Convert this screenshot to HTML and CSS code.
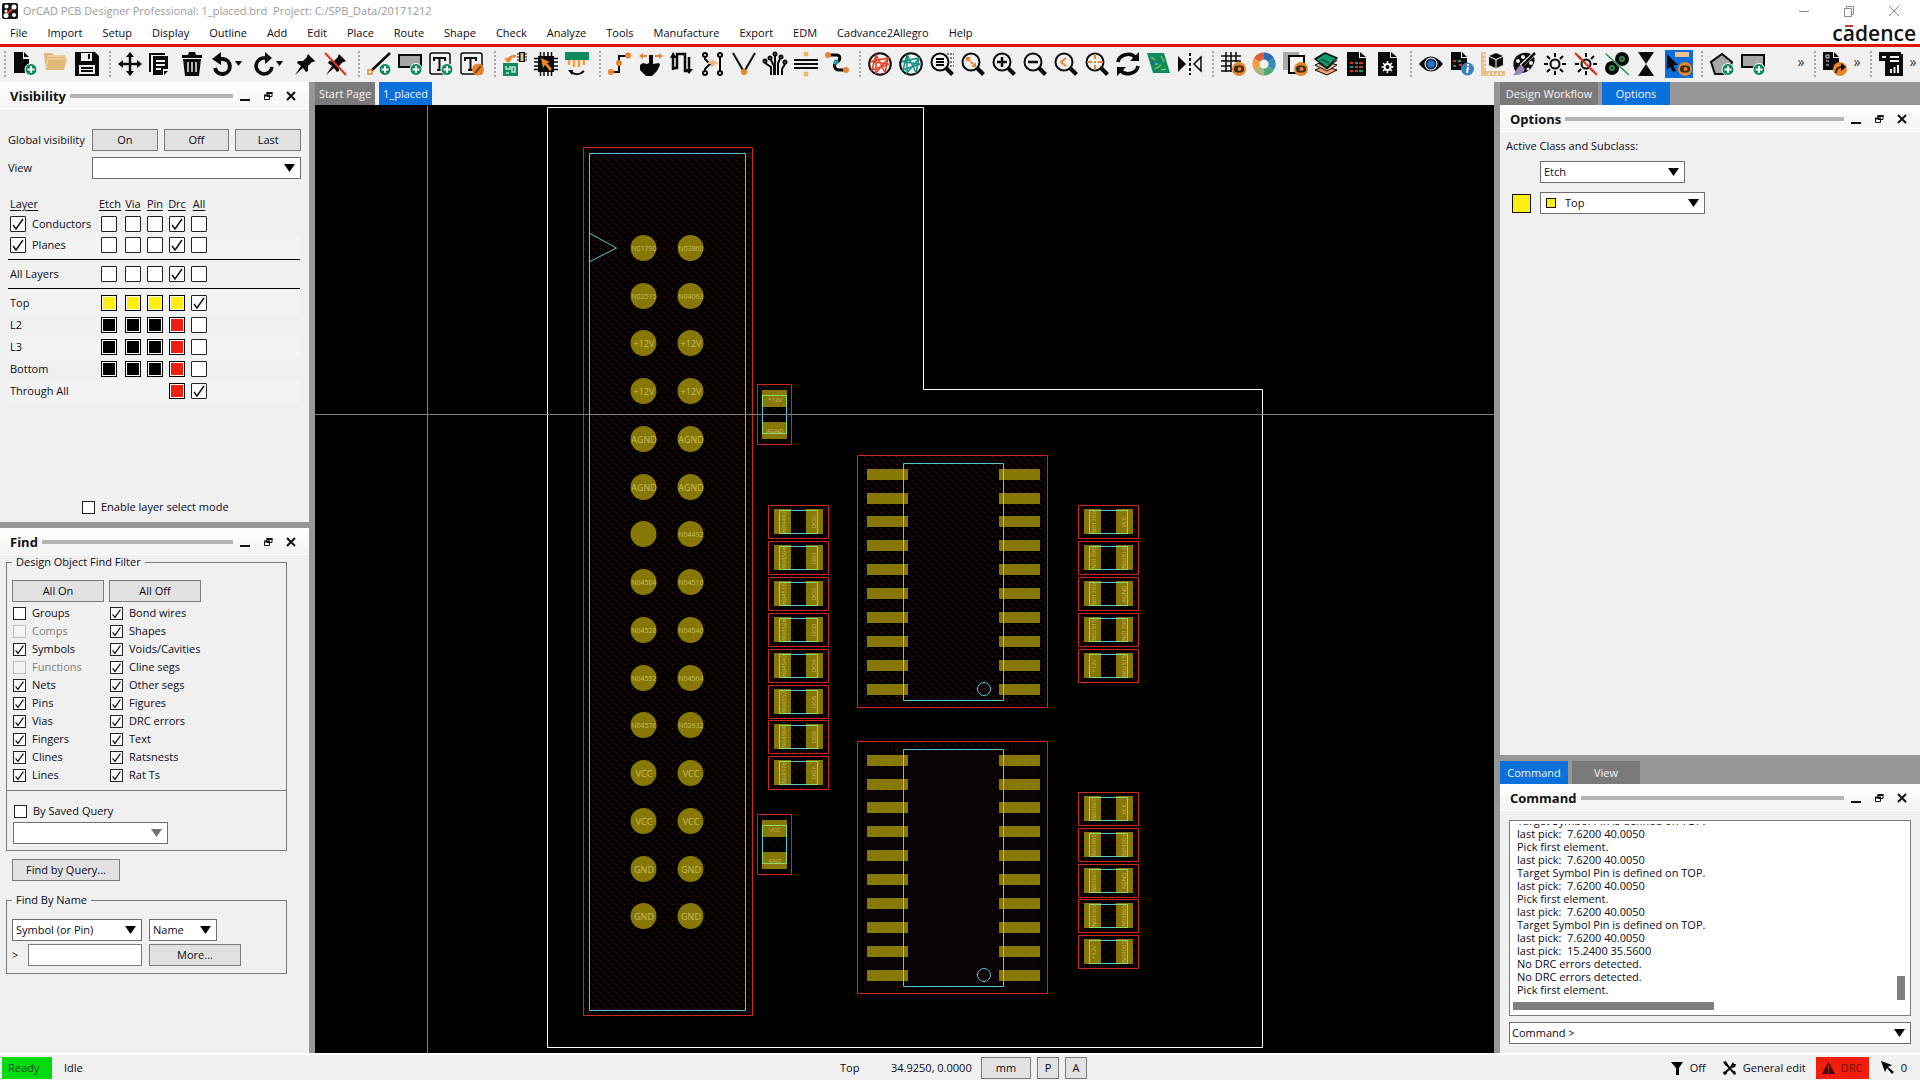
FILE: index.html
```html
<!DOCTYPE html>
<html lang="en">
<head>
<meta charset="utf-8">
<title>OrCAD PCB Designer Professional</title>
<link rel="stylesheet" href="styles.css">
</head>
<body>
<svg class="defs" aria-hidden="true">
  <defs>
    <g id="plus-badge"><circle cx="18" cy="17.500" r="6" fill="#0f8a5c" stroke="#fff" stroke-width="1"/><path d="M14.500 17.500h7M18 14v7" stroke="#fff" stroke-width="2"/></g>
    <g id="eye-badge"><circle cx="18" cy="17" r="7" fill="#e8842a" stroke="none"/><rect x="13" y="13.500" width="10" height="7" rx="3.500" fill="#3a2a1c" stroke="none"/><circle cx="18.500" cy="17" r="2" fill="#e8842a" stroke="none"/></g>
    <g id="lens"><circle cx="10" cy="10" r="8.500"/><path d="M16 16l6.500 6.500" stroke-width="4"/></g>
    <g id="globe"><circle cx="12" cy="12" r="10.800" stroke="#0a0a0a"/><path d="M8 2.500l9 18M8 2.500L4 18l17-6L2.500 9.500l18-3.500L8 21 8 2.500M20 6l-3 15" stroke-width="1.500"/></g>
    <g id="sun"><circle cx="12" cy="12" r="4.500"/><path d="M12 1v4M12 19v4M1 12h4M19 12h4M4 4l3 3M17 17l3 3M20 4l-3 3M7 17l-3 3"/></g>
    <g id="pushpin"><path class="f" d="M15 2l7 7-2 1-1 0-4 4 0 5-2 1-3-4-8 7 6-9-4-3 1-2 5 0 4-4 0-1z"/></g>
    <g id="restore"><path d="M4 1.500h5v4H4zM1.500 4.500h5v4h-5z" fill="none" stroke="#111" stroke-width="1"/><path d="M3.500 2h6M1 4.500h6" stroke="#111" stroke-width="2"/></g>
    <pattern id="hatch" x="588" y="156" width="8" height="8" patternUnits="userSpaceOnUse"><path d="M0 0h1v1H0zM4 4h1v1H4z" fill="#6e0c0c"/></pattern>
    <g id="ic">
      <path class="hatch" d="M858 456h189v251H858z"/>
      <path class="pad" d="M867 469h41v11h-41zm0 24h41v11h-41zm0 23h41v11h-41zm0 24h41v11h-41zm0 24h41v11h-41zm0 24h41v11h-41zm0 24h41v11h-41zm0 24h41v11h-41zm0 24h41v11h-41zm0 24h41v11h-41zM999 469h41v11h-41zm0 24h41v11h-41zm0 23h41v11h-41zm0 24h41v11h-41zm0 24h41v11h-41zm0 24h41v11h-41zm0 24h41v11h-41zm0 24h41v11h-41zm0 24h41v11h-41zm0 24h41v11h-41z"/>
      <path class="keepout" d="M857.500 455.500h190v252h-190z"/>
      <path class="silk" d="M903.500 463.500h100v237h-100z"/>
      <path class="overlap" d="M903.500 469v11m0 13v11m0 12v11m0 13v11m0 13v11m0 13v11m0 13v11m0 13v11m0 13v11m0 13v11M1003.500 469v11m0 13v11m0 12v11m0 13v11m0 13v11m0 13v11m0 13v11m0 13v11m0 13v11m0 13v11"/>
      <circle class="silk" cx="984" cy="689" r="6.500"/>
    </g>
    <g id="chip-h">
      <path class="hatch" d="M1 1h59v32H1z"/>
      <path class="pad" d="M6 4h17v25H6zM38 4h17v25H38z"/>
      <path class="keepout" d="M.5.5h60v33H.5z"/>
      <path class="silk" d="M11.500 5.500h38v23h-38z"/>
      <path class="overlap" d="M23 5.500H11.500v23H23M38 5.500h11.500v23H38"/>
    </g>
    <g id="chip-v">
      <path class="hatch" d="M1 1h33v59H1z"/>
      <path class="pad" d="M5 6h25v17H5zM5 38h25v17H5z"/>
      <path class="keepout" d="M.5.5h34v60H.5z"/>
      <path class="silk" d="M5.500 11.500h24v38h-24z"/>
      <path class="overlap" d="M5.500 23V11.500h24V23M5.500 38v11.500h24V38"/>
    </g>
  </defs>
</svg>

<header class="titlebar">
  <svg class="app-icon" width="16" height="16" viewBox="0 0 16 16"><rect width="16" height="16" rx="2" fill="#15181b"/><path d="M4 12L12 4" stroke="#e0321c" stroke-width="2"/><g fill="#fff"><circle cx="4.500" cy="3.500" r="2"/><circle cx="12" cy="4" r="2.500"/><circle cx="4" cy="8" r="1.500"/><circle cx="4" cy="12.500" r="2.500"/><circle cx="12" cy="12" r="2"/></g></svg>
  <h1>OrCAD PCB Designer Professional: 1_placed.brd&nbsp; Project: C:/SPB_Data/20171212</h1>
  <div class="window-buttons">
    <button aria-label="Minimize window"><svg width="12" height="12"><path d="M1 6.500h10"/></svg></button>
    <button aria-label="Restore window"><svg width="12" height="12"><path d="M1.500 3.500h7v8h-7zM3.500 3V1.500h7v8H9"/></svg></button>
    <button aria-label="Close window"><svg width="12" height="12"><path d="M1 1l10 10M11 1L1 11"/></svg></button>
  </div>
</header>

<nav class="menubar">
  <a href="#">File</a><a href="#">Import</a><a href="#">Setup</a><a href="#">Display</a><a href="#">Outline</a><a href="#">Add</a><a href="#">Edit</a><a href="#">Place</a><a href="#">Route</a><a href="#">Shape</a><a href="#">Check</a><a href="#">Analyze</a><a href="#">Tools</a><a href="#">Manufacture</a><a href="#">Export</a><a href="#">EDM</a><a href="#">Cadvance2Allegro</a><a href="#">Help</a>
  <span class="brand">cadence<i></i></span>
</nav>

<div class="toolbar" role="toolbar">
  <span class="grip"></span>
  <button aria-label="New"><svg viewBox="0 0 24 24"><path class="f" d="M1 0h9v7h6v6l-4 2v6H1zM11 0l5 5h-5z"/><use href="#plus-badge"/></svg></button>
  <button aria-label="Open"><svg viewBox="0 0 24 24"><path d="M0 3V1h8l2 2h11v3h2l-3 12H2z" fill="#e2b877" stroke="none"/><path d="M2 16L4 7h18M3 4h16" stroke="#f2dcb6" stroke-width="1"/></svg></button>
  <button aria-label="Save"><svg viewBox="0 0 24 24"><path class="f" d="M0 0h20l4 4v20H0z"/><path d="M6 1h11v8H6zM4 13h16v9H4z" fill="#f0f0f0" stroke="none"/><path d="M14 2v5M6 16h12M6 19h12"/></svg></button>
  <span class="grip"></span>
  <button aria-label="Move"><svg viewBox="0 0 24 24"><path d="M12 3v18M3 12h18" stroke-width="2.500"/><path class="f" d="M12 0l4 5H8zM12 24l4-5H8zM0 12l5-4v8zM24 12l-5-4v8z"/></svg></button>
  <button aria-label="Copy"><svg viewBox="0 0 24 24"><path d="M1 20V2h15"/><path class="f" d="M4 4h15v13h-5v6H4zM15 19h4l-4 4z"/><path d="M7 9h9M7 13h9M7 17h5" stroke="#f0f0f0"/></svg></button>
  <button aria-label="Delete"><svg viewBox="0 0 24 24"><path class="f" d="M2 3h6l1-3h6l1 3h6v3H2zM3 7h18l-2 17H5z"/><path d="M8 10v10M12 10v10M16 10v10" stroke="#f0f0f0" stroke-width="1.500"/></svg></button>
  <button class="wide" aria-label="Undo"><svg viewBox="0 0 24 24"><path d="M9 7h3a7.500 7.500 0 1 1-8 9" stroke-width="4"/><path class="f" d="M10 0v13L1 7z"/></svg><svg class="drop" viewBox="0 0 10 24"><path class="f" d="M0 9h7l-3.500 5z"/></svg></button>
  <button class="wide" aria-label="Redo"><svg viewBox="0 0 24 24"><path d="M14 6h-3a8 8 0 1 0 9 9" stroke-width="3.500"/><path class="f" d="M13 0v12l7-6z"/></svg><svg class="drop" viewBox="0 0 10 24"><path class="f" d="M0 9h7l-3.500 5z"/></svg></button>
  <button aria-label="Fix"><svg viewBox="0 0 24 24"><use href="#pushpin"/></svg></button>
  <button aria-label="Unfix"><svg viewBox="0 0 24 24"><use href="#pushpin"/><path d="M1 1l21 22" stroke="#e8301c"/></svg></button>
  <span class="grip"></span>
  <button aria-label="Add line"><svg viewBox="0 0 24 24"><path d="M3 20L23 1" stroke-width="2.500"/><path d="M1 18h4v4H1z" fill="#fff" stroke="#e8842a" stroke-width="1.500"/><use href="#plus-badge"/></svg></button>
  <button aria-label="Add rectangle"><svg viewBox="0 0 24 24"><path d="M1 3h22v12H1z" fill="#a6a6aa"/><use href="#plus-badge"/></svg></button>
  <button aria-label="Add text"><svg viewBox="0 0 24 24"><rect x="1" y="1" width="20" height="21" rx="2" stroke-width="1.500"/><path d="M5 9V6h11v3M10.500 6v12M8 18h5" stroke-width="2"/><use href="#plus-badge"/></svg></button>
  <button aria-label="Edit text"><svg viewBox="0 0 24 24"><rect x="1" y="1" width="21" height="21" rx="2" stroke-width="1.500"/><path d="M5 9V6h11v3M10.500 6v12M8 18h5" stroke-width="2"/><circle class="o" cx="18" cy="17.500" r="6"/><path d="M15 21l6-7" stroke="#7a4a22"/></svg></button>
  <span class="grip"></span>
  <button aria-label="Place manually"><svg viewBox="0 0 24 24"><path class="g" d="M0 11h15v13H0z"/><path d="M3 14v3h4v-3M3 21h3M9 15h3v5H9z" stroke="#bfe6d6" stroke-width="1.500"/><path d="M5 10c0-4 3-6 8-6" stroke="#e8842a" stroke-width="2.500"/><path class="o" d="M1 6l8 1-4 4z"/><path d="M14 2h10M14 5h10M14 8h10" stroke-width="1"/><path class="f" d="M16 0h6v10h-6z"/><path d="M17.500 1h3v8h-3z" fill="#e3c07f" stroke="none"/></svg></button>
  <button aria-label="Select part"><svg viewBox="0 0 24 24"><path class="f" d="M4 4h16v16H4z"/><path d="M6.500 0v24M10 0v24M14 0v24M17.500 0v24M0 6.500h24M0 10h24M0 14h24M0 17.500h24" stroke-width="1.500"/><path class="o" d="M7 6l9 4-3 1 5 6-2 2-5-6-2 3z"/></svg></button>
  <button aria-label="Update design"><svg viewBox="0 0 24 24"><path class="g" d="M0 0h24v8H0z"/><path d="M4 8v5M9 8v7M14 8v7M19 8v5" stroke="#f0a03c" stroke-width="2.500"/><path d="M6 20c4 3 9 3 13-1"/><path class="f" d="M3 18l5 0-1 5z"/></svg></button>
  <span class="grip"></span>
  <button aria-label="Slide"><svg viewBox="0 0 24 24"><path d="M3 20h8V4h9" /><circle class="o" cx="3" cy="20" r="3"/><circle class="o" cx="11" cy="11" r="3"/><circle class="o" cx="20" cy="3.500" r="3"/></svg></button>
  <button aria-label="Drag"><svg viewBox="0 0 24 24"><path class="f" d="M10 3h4v9l6-1 1 2-3 6-5 5H7l-6-6v-5l3-2 4 1 2-1z"/><path d="M2 4h6M16 4h6" stroke="#e8842a"/><path class="o" d="M0 4l4-3v6zM24 4l-4-3v6z"/></svg></button>
  <button aria-label="Delay tune"><svg viewBox="0 0 24 24"><path d="M3 18V4M3 16h4V2h8v17h4V5" stroke-width="2.500"/><path class="f" d="M3 0l4 6H0zM19 22l4-5h-8z"/></svg></button>
  <button aria-label="Differential pair"><svg viewBox="0 0 24 24"><path d="M4 4v3l5 5-5 5v3M19 4v16"/><circle cx="4" cy="3" r="2"/><circle cx="19" cy="3" r="2"/><circle cx="4" cy="21" r="2"/><circle cx="19" cy="21" r="2"/><path d="M7 11h4M11 9l4 2-4 3z" stroke="#f0b878" fill="#f0b878"/></svg></button>
  <button aria-label="Vertex"><svg viewBox="0 0 24 24"><path d="M1 1l11 19L23 1"/><circle class="o" cx="12" cy="20" r="3"/></svg></button>
  <button aria-label="Fanout"><svg viewBox="0 0 24 24"><path d="M8 23v-8l-6-4M12 23V4M11 23v-9L8 8M15 23V11l2-4M19 23v-6l3-5" /><circle cx="2" cy="9" r="1.500"/><circle cx="7" cy="6" r="1.500"/><circle cx="12" cy="2" r="1.500"/><circle cx="18" cy="5" r="1.500"/><circle cx="22" cy="10" r="1.500"/></svg></button>
  <button aria-label="Bus route"><svg viewBox="0 0 24 24"><path d="M0 8h24M0 12h24M0 16h24"/><circle cx="12" cy="2" r="1.500" stroke="#f0b060"/><circle cx="12" cy="22" r="1.500" stroke="#f0b060"/></svg></button>
  <button aria-label="Auto route"><svg viewBox="0 0 24 24"><path d="M4 3h7c5 0 5 5 1 7s-3 8 2 8h6" stroke-width="3"/><circle class="o" cx="3" cy="3" r="3"/><circle class="o" cx="21" cy="18" r="3"/><circle cx="11" cy="10" r="2.500" fill="#2a9ab0" stroke="none"/></svg></button>
  <span class="grip"></span>
  <button aria-label="Unrats all"><svg viewBox="0 0 24 24" class="rats-off"><use href="#globe"/></svg></button>
  <button aria-label="Rats all"><svg viewBox="0 0 24 24" class="rats-on"><use href="#globe"/></svg></button>
  <button aria-label="Zoom by points"><svg viewBox="0 0 24 24"><use href="#lens"/><path d="M6 7h8M6 10h8M6 13h8"/><path d="M17 2h7M20 6h4M20 10h4M20 14h4" stroke-dasharray="2 1" stroke-width="1"/></svg></button>
  <button aria-label="Zoom fit"><svg viewBox="0 0 24 24"><use href="#lens"/><path d="M7 7l7 7" stroke="#e8842a" stroke-dasharray="3 1"/><path class="o" d="M5 5h5l-5 5zM15 15h-5l5-5z"/></svg></button>
  <button aria-label="Zoom in"><svg viewBox="0 0 24 24"><use href="#lens"/><path d="M5 10h10M10 5v10" stroke-width="2.500"/></svg></button>
  <button aria-label="Zoom out"><svg viewBox="0 0 24 24"><use href="#lens"/><path d="M5 10h10" stroke-width="2.500"/></svg></button>
  <button aria-label="Zoom previous"><svg viewBox="0 0 24 24"><use href="#lens"/><path d="M12 6l-5 4 5 4" stroke="#e8842a"/></svg></button>
  <button aria-label="Zoom center"><svg viewBox="0 0 24 24"><use href="#lens"/><path d="M10 2v5M10 9v2M10 13v5M2 10h5M9 10h2M13 10h5" stroke="#e8842a"/></svg></button>
  <button aria-label="Redraw"><svg viewBox="0 0 24 24"><path d="M2 10c1-7 12-11 18-4M22 14c-1 7-12 11-18 4" stroke-width="3.500"/><path class="f" d="M23 0v9h-9zM1 24v-9h9z"/></svg></button>
  <button aria-label="3D canvas"><svg viewBox="0 0 24 24"><path class="g" d="M0 1h17l6 20H6z"/><path d="M4 5l4 3M14 4l3 6M8 17l6-4M14 18l5-1M8 12h3" stroke="#79c850" stroke-width="1.500"/><path d="M4 9l3 3M12 8l2 1" stroke="#2b62a8"/></svg></button>
  <button aria-label="Flip design"><svg viewBox="0 0 24 24"><path class="f" d="M0 4l8 8-8 8z"/><path d="M12 1v22" stroke-dasharray="3 2"/><path d="M23 5v14l-7-7z" stroke-width="1.500"/></svg></button>
  <span class="grip"></span>
  <button aria-label="Grid toggle"><svg viewBox="0 0 24 24"><path d="M5 0v20M10 0v20M15 0v10M0 4h20M0 9h20M0 14h10M0 19h10" stroke-width="1.500"/><use href="#eye-badge"/></svg></button>
  <button aria-label="Color"><svg viewBox="0 0 24 24"><g stroke-width="7"><path d="M12 4a8 8 0 0 1 7 4" stroke="#2b6cb8"/><path d="M19 8a8 8 0 0 1 0 8" stroke="#3a8ab8"/><path d="M19 16a8 8 0 0 1-7 4" stroke="#4fa878"/><path d="M12 20a8 8 0 0 1-7-4" stroke="#a8b878"/><path d="M5 16a8 8 0 0 1 0-8" stroke="#f0a03c"/><path d="M5 8a8 8 0 0 1 7-4" stroke="#e25a3c"/></g></svg></button>
  <button aria-label="Shadow toggle"><svg viewBox="0 0 24 24"><path d="M0 0h16v18H0z" fill="#a8a8a8" stroke="none"/><path d="M6 4h15v17H6z" fill="#f4f4f4"/><use href="#eye-badge"/></svg></button>
  <button aria-label="Cross section"><svg viewBox="0 0 24 24" stroke-linejoin="round"><path d="M1 18l9-4 13 4-10 5z" fill="#f0a070" stroke-width="1"/><path d="M1 13l9-4 13 4-10 6z" fill="#e8c89a" stroke-width="1"/><path d="M1 7l10-6 12 5-10 10z" fill="#0f9a6c" stroke-width="1.500"/><path d="M4 11l9 6 10-9M7 7l8 4" stroke-width="1"/></svg></button>
  <button aria-label="Constraint manager"><svg viewBox="0 0 24 24"><path class="f" d="M2 0h12v6h7v18H2zM15 0l6 5h-6z"/><path d="M5 11h3M14 11h4M5 19h3" stroke="#e03020"/><path d="M10 11h3M5 15h3M14 19h4" stroke="#1f9a60"/><path d="M10 15h3M14 15h4M10 19h3" stroke="#b04830"/></svg></button>
  <button aria-label="Design parameters"><svg viewBox="0 0 24 24"><path class="f" d="M2 0h12v6h7v18H2zM15 0l6 5h-6z"/><circle cx="11.500" cy="15" r="3" stroke="#fff"/><path d="M11.500 9v3M11.500 18v3M5.500 15h3M14.500 15h3M7 11l2 2M14 17l2 2M16 11l-2 2M9 17l-2 2" stroke="#fff" stroke-width="1.500"/></svg></button>
  <span class="grip"></span>
  <button aria-label="Show element"><svg viewBox="0 0 24 24"><path class="f" d="M0 12Q12-3 24 12Q12 27 0 12z"/><circle cx="12" cy="12" r="6.500" fill="#fff" stroke="none"/><circle cx="12" cy="12" r="4.500" fill="#2878c8" stroke="#17365c"/></svg></button>
  <button aria-label="Properties"><svg viewBox="0 0 24 24"><path class="f" d="M1 0h10v6h6v12H1zM12 0l5 5h-5z"/><path d="M3 9h3M9 13h3" stroke="#e03020"/><path d="M8 9h3M3 14h3" stroke="#1f9a60"/><circle cx="17.500" cy="17" r="6.500" fill="#3a80c4" stroke="none"/><path d="M18 12v2M18 15l-1 6" stroke="#fff"/></svg></button>
  <button aria-label="Measure"><svg viewBox="0 0 24 24"><path d="M0 0h5v19h19v5H0z" fill="#e8c08a" stroke="none"/><path d="M2 3h3M3 7h2M2 11h3M3 15h2M8 21v2M12 20v3M16 21v2M20 20v3" stroke="#fff" stroke-width="1"/><path class="f" d="M15 1l7 3-7 3-7-3zM8 5l6.500 3v8L8 13zM22 5l-6.500 3v8L22 13z"/></svg></button>
  <button aria-label="Color palette"><svg viewBox="0 0 24 24"><path class="f" d="M4 20C-3 10 5-1 16 1c5 1 8 5 6 10-3 8-10 12-18 9z"/><path d="M24 0L9 14" stroke="#f0f0f0" stroke-width="4"/><path d="M23 1L10 14" stroke-width="2.500"/><path d="M9 13l4 4c-2 5-6 7-12 6 3-2 3-8 8-10z" fill="#9a86b8" stroke="none"/><g fill="#f0f0f0" stroke="none"><circle cx="6" cy="9" r="2"/><circle cx="11" cy="5" r="2"/><circle cx="19" cy="11" r="2"/><circle cx="16" cy="17" r="1.500"/></g></svg></button>
  <button aria-label="Highlight"><svg viewBox="0 0 24 24"><use href="#sun"/></svg></button>
  <button aria-label="Dehighlight"><svg viewBox="0 0 24 24"><use href="#sun"/><path d="M1 1l22 22" stroke="#e8301c"/></svg></button>
  <button aria-label="Dim toggle"><svg viewBox="0 0 24 24"><circle class="f" cx="17" cy="7" r="7"/><circle class="f" cx="7" cy="16" r="7"/><circle cx="17" cy="7" r="2" stroke="#3a8a50"/><circle cx="7" cy="16" r="2" stroke="#3a8a50"/><path d="M0 1l23 21" stroke="#e0d050" stroke-width="1.500"/><path d="M1 2l23 21" stroke="#1f9a80" stroke-width="1.500"/></svg></button>
  <button aria-label="Waive"><svg viewBox="0 0 24 24"><path class="f" d="M2 0h16l-8 12zM10 12l8 12H2z"/></svg></button>
  <button class="on" aria-label="Application mode"><svg viewBox="0 0 24 24"><path d="M8 0h14v5H8z" fill="#ecc08c" stroke="none"/><path class="f" d="M0 2l11 11-5 0 3 6-3 1-3-5-3 3z"/><use href="#eye-badge"/></svg></button>
  <span class="grip"></span>
  <button aria-label="Add shape"><svg viewBox="0 0 24 24"><path d="M12 2l10 8-4 12H5L1 10z" fill="#a6a6aa"/><use href="#plus-badge"/></svg></button>
  <button aria-label="Add filled rectangle"><svg viewBox="0 0 24 24"><path d="M1 3h22v12H1z" fill="#a6a6aa"/><use href="#plus-badge"/></svg></button>
  <button class="more more-first" aria-label="More shape tools">»</button>
  <span class="grip"></span>
  <button aria-label="Export"><svg viewBox="0 0 24 24"><path class="f" d="M0 0h10v6h6v6l-6 6H0zM11 0l5 5h-5z"/><path d="M3 3h3v3H3zM3 9h3M3 13h3" stroke="#ddd" stroke-width="1"/><circle class="o" cx="17" cy="17" r="7"/><path d="M13 21c0-4 2-6 6-6" stroke="#3a2a1c"/><path class="f" d="M18 11l5 4-5 4z"/></svg></button>
  <button class="more" aria-label="More export tools">»</button>
  <span class="grip"></span>
  <button aria-label="Reports"><svg viewBox="0 0 24 24"><path class="f" d="M0 0h22v2h2v22H6V9H0z"/><path d="M3 5h4M11 5h9M11 9h9M12 21v-4M15.500 21v-6M19 21v-8" stroke="#f0f0f0"/></svg></button>
  <button class="more" aria-label="More report tools">»</button>
</div>

<main class="workspace">
  <div class="side left">
    <section class="panel visibility">
      <header class="panel-head"><h2>Visibility</h2><span class="rule"></span>
        <button aria-label="Minimize"><svg width="10" height="10"><path d="M0 9h10" stroke="#111" stroke-width="2"/></svg></button><button aria-label="Float"><svg width="10" height="10"><use href="#restore"/></svg></button><button aria-label="Close"><svg width="10" height="10"><path d="M1 1l8 8M9 1L1 9" stroke="#111" stroke-width="2"/></svg></button></header>
      <div class="vis-form">
        <span>Global visibility</span><button class="btn">On</button><button class="btn">Off</button><button class="btn">Last</button>
        <label for="view">View</label><select id="view" class="drop-list"><option></option></select>
      </div>
      <table class="layers">
        <thead><tr><th>Layer</th><th>Etch</th><th>Via</th><th>Pin</th><th>Drc</th><th>All</th><th></th></tr></thead>
        <tbody class="kinds">
          <tr><td><label><input type="checkbox" checked>Conductors</label></td><td><input type="checkbox" aria-label="Conductors etch"></td><td><input type="checkbox" aria-label="Conductors via"></td><td><input type="checkbox" aria-label="Conductors pin"></td><td><input type="checkbox" checked aria-label="Conductors drc"></td><td><input type="checkbox" aria-label="Conductors all"></td><td></td></tr>
          <tr class="band"><td><label><input type="checkbox" checked>Planes</label></td><td><input type="checkbox" aria-label="Planes etch"></td><td><input type="checkbox" aria-label="Planes via"></td><td><input type="checkbox" aria-label="Planes pin"></td><td><input type="checkbox" checked aria-label="Planes drc"></td><td><input type="checkbox" aria-label="Planes all"></td><td></td></tr>
        </tbody>
        <tbody class="ruled">
          <tr><td>All Layers</td><td><input type="checkbox" aria-label="All layers etch"></td><td><input type="checkbox" aria-label="All layers via"></td><td><input type="checkbox" aria-label="All layers pin"></td><td><input type="checkbox" checked aria-label="All layers drc"></td><td><input type="checkbox" aria-label="All layers all"></td><td></td></tr>
        </tbody>
        <tbody class="stack">
          <tr class="band"><td>Top</td><td><button class="sw yellow" aria-label="Top etch color"></button></td><td><button class="sw yellow" aria-label="Top via color"></button></td><td><button class="sw yellow" aria-label="Top pin color"></button></td><td><button class="sw yellow" aria-label="Top drc color"></button></td><td><input type="checkbox" checked aria-label="Top all"></td><td></td></tr>
          <tr><td>L2</td><td><button class="sw black" aria-label="L2 etch color"></button></td><td><button class="sw black" aria-label="L2 via color"></button></td><td><button class="sw black" aria-label="L2 pin color"></button></td><td><button class="sw red" aria-label="L2 drc color"></button></td><td><input type="checkbox" aria-label="L2 all"></td><td></td></tr>
          <tr class="band"><td>L3</td><td><button class="sw black" aria-label="L3 etch color"></button></td><td><button class="sw black" aria-label="L3 via color"></button></td><td><button class="sw black" aria-label="L3 pin color"></button></td><td><button class="sw red" aria-label="L3 drc color"></button></td><td><input type="checkbox" aria-label="L3 all"></td><td></td></tr>
          <tr><td>Bottom</td><td><button class="sw black" aria-label="Bottom etch color"></button></td><td><button class="sw black" aria-label="Bottom via color"></button></td><td><button class="sw black" aria-label="Bottom pin color"></button></td><td><button class="sw red" aria-label="Bottom drc color"></button></td><td><input type="checkbox" aria-label="Bottom all"></td><td></td></tr>
          <tr class="band"><td>Through All</td><td></td><td></td><td></td><td><button class="sw red" aria-label="Through drc color"></button></td><td><input type="checkbox" checked aria-label="Through all"></td><td></td></tr>
        </tbody>
      </table>
      <label class="check layer-mode"><input type="checkbox">Enable layer select mode</label>
    </section>

    <section class="panel find">
      <header class="panel-head"><h2>Find</h2><span class="rule"></span>
        <button aria-label="Minimize"><svg width="10" height="10"><path d="M0 9h10" stroke="#111" stroke-width="2"/></svg></button><button aria-label="Float"><svg width="10" height="10"><use href="#restore"/></svg></button><button aria-label="Close"><svg width="10" height="10"><path d="M1 1l8 8M9 1L1 9" stroke="#111" stroke-width="2"/></svg></button></header>
      <fieldset class="group filter">
        <legend>Design Object Find Filter</legend>
        <div class="filter-grid">
          <button class="btn">All On</button><button class="btn">All Off</button>
          <label class="check"><input type="checkbox">Groups</label><label class="check"><input type="checkbox" checked>Bond wires</label>
          <label class="check off"><input type="checkbox" disabled>Comps</label><label class="check"><input type="checkbox" checked>Shapes</label>
          <label class="check"><input type="checkbox" checked>Symbols</label><label class="check"><input type="checkbox" checked>Voids/Cavities</label>
          <label class="check off"><input type="checkbox" disabled>Functions</label><label class="check"><input type="checkbox" checked>Cline segs</label>
          <label class="check"><input type="checkbox" checked>Nets</label><label class="check"><input type="checkbox" checked>Other segs</label>
          <label class="check"><input type="checkbox" checked>Pins</label><label class="check"><input type="checkbox" checked>Figures</label>
          <label class="check"><input type="checkbox" checked>Vias</label><label class="check"><input type="checkbox" checked>DRC errors</label>
          <label class="check"><input type="checkbox" checked>Fingers</label><label class="check"><input type="checkbox" checked>Text</label>
          <label class="check"><input type="checkbox" checked>Clines</label><label class="check"><input type="checkbox" checked>Ratsnests</label>
          <label class="check"><input type="checkbox" checked>Lines</label><label class="check"><input type="checkbox" checked>Rat Ts</label>
        </div>
        <div class="saved">
          <label class="check"><input type="checkbox">By Saved Query</label>
          <select class="drop-list" disabled aria-label="Saved query"><option></option></select>
        </div>
      </fieldset>
      <button class="btn query">Find by Query...</button>
      <fieldset class="group by-name">
        <legend>Find By Name</legend>
        <div class="name-rows">
          <div class="name-row"><select class="drop-list kind" aria-label="Object type"><option>Symbol (or Pin)</option></select><select class="drop-list mode" aria-label="Match by"><option>Name</option></select></div>
          <div class="name-row"><label for="name-text">&gt;</label><input id="name-text" class="text-box" type="text"><button class="btn">More...</button></div>
        </div>
      </fieldset>
    </section>
  </div>

  <div class="center">
    <div class="tabs doc-tabs"><button>Start Page</button><button class="active">1_placed</button></div>
    <svg class="board" viewBox="315 105 1179 948" preserveAspectRatio="xMidYMid slice" role="img" aria-label="Board layout">
      <path class="outline" d="M547.500 107.500h376v282h339v658h-715z"/>
      <path class="hatch" d="M584 148h168v867H584z"/>
      <g class="pad">
        <g id="column"><circle cx="643.500" cy="248" r="13"/><circle cx="643.500" cy="296" r="13"/><circle cx="643.500" cy="343" r="13"/><circle cx="643.500" cy="391" r="13"/><circle cx="643.500" cy="439" r="13"/><circle cx="643.500" cy="487" r="13"/><circle cx="643.500" cy="534" r="13"/><circle cx="643.500" cy="582" r="13"/><circle cx="643.500" cy="630" r="13"/><circle cx="643.500" cy="678" r="13"/><circle cx="643.500" cy="725" r="13"/><circle cx="643.500" cy="773" r="13"/><circle cx="643.500" cy="821" r="13"/><circle cx="643.500" cy="869" r="13"/><circle cx="643.500" cy="916" r="13"/></g>
        <use href="#column" x="47"/>
      </g>
      <path class="keepout" d="M583.500 147.500h169v868h-169z"/>
      <path class="silk" d="M589.500 153.500h156v857h-156zM590 233.500l26.500 14.500-26.500 13.500"/>
      <g class="net small">
        <text x="644" y="251">N01790</text><text x="691" y="251">N03860</text>
        <text x="644" y="299">N02515</text><text x="691" y="299">N04063</text>
        <text x="691" y="537">N04492</text>
        <text x="644" y="585">N04504</text><text x="691" y="585">N04516</text>
        <text x="644" y="633">N04528</text><text x="691" y="633">N04540</text>
        <text x="644" y="681">N04552</text><text x="691" y="681">N04564</text>
        <text x="644" y="728">N04576</text><text x="691" y="728">N02632</text>
      </g>
      <g class="net">
        <text x="644" y="347">+12V</text><text x="691" y="347">+12V</text>
        <text x="644" y="395">+12V</text><text x="691" y="395">+12V</text>
        <text x="644" y="443">AGND</text><text x="691" y="443">AGND</text>
        <text x="644" y="491">AGND</text><text x="691" y="491">AGND</text>
        <text x="644" y="777">VCC</text><text x="691" y="777">VCC</text>
        <text x="644" y="825">VCC</text><text x="691" y="825">VCC</text>
        <text x="644" y="873">GND</text><text x="691" y="873">GND</text>
        <text x="644" y="920">GND</text><text x="691" y="920">GND</text>
      </g>
      <use href="#chip-v" x="757" y="384"/><use href="#chip-v" x="757" y="814"/>
      <g class="net tiny"><text x="775" y="402">+12V</text><text x="775" y="433">AGND</text><text x="775" y="832">VCC</text><text x="775" y="863">GND</text></g>
      <use href="#chip-h" x="768" y="505"/><use href="#chip-h" x="768" y="541"/><use href="#chip-h" x="768" y="577"/><use href="#chip-h" x="768" y="613"/><use href="#chip-h" x="768" y="649"/><use href="#chip-h" x="768" y="685"/><use href="#chip-h" x="768" y="720"/><use href="#chip-h" x="768" y="756"/>
      <use href="#chip-h" x="1078" y="505"/><use href="#chip-h" x="1078" y="541"/><use href="#chip-h" x="1078" y="577"/><use href="#chip-h" x="1078" y="613"/><use href="#chip-h" x="1078" y="649"/>
      <use href="#chip-h" x="1078" y="792"/><use href="#chip-h" x="1078" y="828"/><use href="#chip-h" x="1078" y="864"/><use href="#chip-h" x="1078" y="899"/><use href="#chip-h" x="1078" y="935"/>
      <g class="net tiny" transform="rotate(-90)">
        <text x="-522" y="786">N04492</text><text x="-522" y="816">DO0</text>
        <text x="-558" y="786">N04504</text><text x="-558" y="816">DO1</text>
        <text x="-594" y="786">N04516</text><text x="-594" y="816">DO2</text>
        <text x="-630" y="786">N04528</text><text x="-630" y="816">DO3</text>
        <text x="-666" y="786">N04540</text><text x="-666" y="816">DO4</text>
        <text x="-702" y="786">N04552</text><text x="-702" y="816">DO5</text>
        <text x="-737" y="786">N04564</text><text x="-737" y="816">DO6</text>
        <text x="-773" y="786">N04576</text><text x="-773" y="816">DO7</text>
        <text x="-522" y="1096">N01790</text><text x="-522" y="1126">VCC</text>
        <text x="-558" y="1096">N01790</text><text x="-558" y="1126">N02515</text>
        <text x="-594" y="1096">N01790</text><text x="-594" y="1126">AGND</text>
        <text x="-630" y="1096">N02515</text><text x="-630" y="1126">N01790</text>
        <text x="-666" y="1096">+12V</text><text x="-666" y="1126">N02515</text>
        <text x="-809" y="1096">N03860</text><text x="-809" y="1126">VCC</text>
        <text x="-845" y="1096">N03860</text><text x="-845" y="1126">N04063</text>
        <text x="-881" y="1096">N03860</text><text x="-881" y="1126">AGND</text>
        <text x="-916" y="1096">N04063</text><text x="-916" y="1126">N03860</text>
        <text x="-952" y="1096">+12V</text><text x="-952" y="1126">N04063</text>
      </g>
      <use href="#ic"/><use href="#ic" y="286"/>
      <path class="cursor" d="M427.500 105v948M315 414.500h1179"/>
    </svg>
  </div>

  <div class="side right">
    <div class="tabs"><button class="tab-wide">Design Workflow</button><button class="active tab">Options</button></div>
    <section class="panel options">
      <header class="panel-head"><h2>Options</h2><span class="rule"></span>
        <button aria-label="Minimize"><svg width="10" height="10"><path d="M0 9h10" stroke="#111" stroke-width="2"/></svg></button><button aria-label="Float"><svg width="10" height="10"><use href="#restore"/></svg></button><button aria-label="Close"><svg width="10" height="10"><path d="M1 1l8 8M9 1L1 9" stroke="#111" stroke-width="2"/></svg></button></header>
      <div class="class-form">
        <label for="klass">Active Class and Subclass:</label>
        <select id="klass" class="drop-list"><option>Etch</option></select>
        <button class="active-color" aria-label="Subclass color"></button>
        <span class="subclass"><select class="drop-list" aria-label="Subclass"><option>Top</option></select><i></i></span>
      </div>
    </section>
    <div class="tabs lower"><button class="active tab">Command</button><button class="tab">View</button></div>
    <section class="panel command">
      <header class="panel-head"><h2>Command</h2><span class="rule"></span>
        <button aria-label="Minimize"><svg width="10" height="10"><path d="M0 9h10" stroke="#111" stroke-width="2"/></svg></button><button aria-label="Float"><svg width="10" height="10"><use href="#restore"/></svg></button><button aria-label="Close"><svg width="10" height="10"><path d="M1 1l8 8M9 1L1 9" stroke="#111" stroke-width="2"/></svg></button></header>
      <div class="log"><div class="lines"><p>Target Symbol Pin is defined on TOP.</p><p>last pick:  7.6200 40.0050</p><p>Pick first element.</p><p>last pick:  7.6200 40.0050</p><p>Target Symbol Pin is defined on TOP.</p><p>last pick:  7.6200 40.0050</p><p>Pick first element.</p><p>last pick:  7.6200 40.0050</p><p>Target Symbol Pin is defined on TOP.</p><p>last pick:  7.6200 40.0050</p><p>last pick:  15.2400 35.5600</p><p>No DRC errors detected.</p><p>No DRC errors detected.</p><p>Pick first element.</p></div><i class="thumb-v"></i><i class="thumb-h"></i></div>
      <select class="drop-list prompt" aria-label="Command line"><option>Command &gt;</option></select>
    </section>
  </div>
</main>

<footer class="status">
  <div class="status-left"><span class="ready">Ready</span><span>Idle</span></div>
  <div class="status-mid"><span class="layer-name">Top</span><span class="coords">34.9250, 0.0000</span><button class="btn unit">mm</button><button class="btn">P</button><button class="btn">A</button></div>
  <div class="status-right">
    <span class="item"><svg width="12" height="14"><path d="M0 1h12L8 7v7H5V7z"/></svg>Off</span>
    <span class="item"><svg width="13" height="14"><path d="M2 12l7-7M3 3l8 9" stroke="#111" stroke-width="2"/><path d="M8 4l2-3 1 2 2 0-1 3-3 1zM0 1l3-1 2 4-2 1zM0 11l3-1 1 3-3 1zM9 10l3 0 1 3-2 1z"/></svg>General edit</span>
    <button class="drc"><svg width="13" height="12"><path d="M6.500 0L13 12H0z" fill="#3a0a05"/><path d="M6.500 4v4M6.500 9v2" stroke="#f21d0a"/></svg>DRC</button>
    <span class="item picks"><svg width="13" height="13"><path d="M0 0l11 4-4 2 6 5-2 2-5-6-2 4z"/></svg>0</span>
  </div>
</footer>
</body>
</html>
```
FILE: styles.css
```css
* { box-sizing: border-box; }
body {
  margin: 0;
  min-height: 100vh;
  display: flex;
  flex-direction: column;
  background: #f0f0f0;
  color: #0b0b18;
  font: 11px/16px "Open Sans", "Noto Sans", sans-serif;
}
button, select, input { font: inherit; color: inherit; margin: 0; border-radius: 0; }
button { border: 0; padding: 0; background: none; }
h1, h2, p { margin: 0; }
.defs { position: absolute; width: 0; height: 0; }

/* Window chrome */
.titlebar { display: flex; align-items: center; height: 23px; padding: 0 20px 2px 2px; gap: 5px; background: #fff; }
.titlebar h1 { flex: 1; font-size: 11px; font-weight: 400; color: #9a9a9a; }
.window-buttons { display: flex; gap: 33px; }
.window-buttons button { height: 12px; display: flex; }
.window-buttons path { fill: none; stroke: #8a8a8a; }
.menubar { display: flex; align-items: center; gap: 20px; height: 21px; padding: 0 4px 2px 10px; background: #fff; }
.menubar a { color: inherit; text-decoration: none; }
.brand { position: relative; margin-left: auto; font-size: 21px; line-height: 20px; font-weight: 600; color: #111; }
.brand i { position: absolute; left: 13px; top: 2px; width: 8px; height: 2px; background: #c8362c; }

/* Toolbar */
.toolbar { display: flex; align-items: center; gap: 7px; height: 38px; padding: 0 4px 2px 1px; border-top: 3px solid #dc1400; }
.toolbar button { flex: none; width: 24px; height: 24px; display: flex; }
.toolbar button.wide { width: 34px; }
.toolbar button.on { box-shadow: 0 0 0 2px #0a6fdc; background: #0a6fdc; }
.toolbar button.more { width: 6px; font-size: 14px; line-height: 20px; color: #333; justify-content: center; }
.toolbar button.more-first { margin-left: auto; }
.toolbar svg { width: 24px; height: 24px; flex: none; overflow: visible; fill: none; stroke: #0a0a0a; stroke-width: 2; }
.toolbar svg.drop { width: 10px; }
.toolbar svg.rats-off { stroke: #e2432a; }
.toolbar svg.rats-on { stroke: #129080; }
.f { fill: #0a0a0a; stroke: none; }
.o { fill: #e8842a; stroke: none; }
.g { fill: #0f8a5c; stroke: none; }
.grip { flex: none; width: 5px; height: 26px; background: repeating-linear-gradient(#a8a8a8 0 2px, transparent 2px 4px) right / 2px 100% no-repeat; }

/* Workspace */
.workspace { flex: 1; display: grid; grid-template-columns: 309px minmax(0, 1fr) 420px; column-gap: 6px; background: #969696; min-height: 0; }
.side { display: flex; flex-direction: column; }
.left { gap: 6px; }
.panel { background: #f0f0f0; }
.panel-head { flex: none; display: flex; align-items: center; height: 27px; padding: 2px 13px 0 10px; background: linear-gradient(#fff, #f4f4f4); border-bottom: 1px solid #fff; }
.panel-head h2 { font-size: 13px; line-height: 20px; font-weight: 700; color: #111; margin-right: 4px; }
.panel-head .rule { flex: 1; height: 4px; background: #b4b4b4; margin-right: 7px; }
.panel-head button { width: 10px; height: 10px; display: flex; margin-left: 13px; }
.panel-head .rule + button { margin-left: 0; }

.btn { height: 22px; border: 1px solid #7a7a7a; background: #e1e1e1; text-align: center; }
.drop-list {
  height: 22px; border: 1px solid #6e6e6e; padding: 0 20px 0 3px; appearance: none; opacity: 1;
  background: #fff url("data:image/svg+xml,%3Csvg xmlns='http://www.w3.org/2000/svg' width='11' height='8'%3E%3Cpath d='M0 0h11L5.500 8z'/%3E%3C/svg%3E") right 5px center no-repeat;
}
.drop-list:disabled { background-image: url("data:image/svg+xml,%3Csvg xmlns='http://www.w3.org/2000/svg' width='11' height='8'%3E%3Cpath fill='%23707070' d='M0 0h11L5.500 8z'/%3E%3C/svg%3E"); }
input[type="checkbox"] { appearance: none; flex: none; width: 13px; height: 13px; border: 1px solid #222; background: #fff center / 100% no-repeat; }
input[type="checkbox"]:checked { background-image: url("data:image/svg+xml,%3Csvg xmlns='http://www.w3.org/2000/svg' viewBox='0 0 14 14'%3E%3Cpath d='M2 8l3 4 7-10' fill='none' stroke='%23111' stroke-width='1.500'/%3E%3C/svg%3E"); }
input[type="checkbox"]:disabled { border-color: #bcbcbc; background-color: #f4f4f4; }
.check { display: flex; align-items: center; gap: 6px; }
.check.off { color: #7c7c7c; }
.text-box { height: 22px; border: 1px solid #7a7a7a; background: #fff; padding: 0 3px; }

/* Visibility */
.visibility { flex: 0 0 440px; }
.vis-form { display: grid; grid-template-columns: 78px 1fr 1fr 1fr; gap: 6px; padding: 20px 8px 0; align-items: center; white-space: nowrap; }
.vis-form .drop-list { grid-column: 2 / -1; }
.layers { width: 292px; margin: 16px 0 0 8px; border-collapse: collapse; table-layout: fixed; }
.layers th, .layers td { padding: 0; height: 22px; font-weight: 400; }
.layers td { text-align: left; }
.layers th { height: 18px; text-align: center; text-decoration: underline; text-underline-offset: 2px; white-space: nowrap; }
.layers th:first-child { width: 90px; text-align: left; }
.layers th:first-child, .layers td:first-child { padding-left: 2px; }
.layers th:nth-child(2) { width: 24px; }
.layers th:nth-child(n+3):nth-child(-n+6) { width: 22px; }
.layers td:not(:first-child) > * { display: block; margin-left: 3px; }
.layers label { display: flex; align-items: center; gap: 6px; }
.layers input { width: 16px; height: 16px; border-radius: 1px; }
.layers .ruled { border-top: 1px solid #000; border-bottom: 1px solid #000; }
.layers .ruled td { height: 29px; }
.layers .kinds .band td { height: 24px; padding-bottom: 3px; }
.layers .stack tr:first-child td { height: 26px; padding-top: 3px; }
.band { background: #f3f3f3; }
.sw { width: 16px; height: 16px; border: 1px solid #000; box-shadow: inset 0 0 0 1px #fff; }
.yellow { background: #fdee10; }
.black { background: #000; }
.red { background: #f01e0c; }
.layer-mode { margin: 97px 0 0 82px; }

/* Find */
.find { flex: 1; }
.group { margin: 0 22px 0 6px; padding: 0; border: 1px solid #7a7a7a; min-width: 0; }
.group legend { margin-left: 5px; padding: 0 4px; line-height: 14px; }
.filter-grid { display: grid; grid-template-columns: 92px 92px; grid-template-rows: 24px; grid-auto-rows: 18px; column-gap: 5px; padding: 11px 5px 6px; }
.filter-grid .btn { margin-bottom: 2px; }
.filter-grid .check { padding-left: 1px; }
.saved { display: flex; flex-direction: column; align-items: flex-start; gap: 3px; padding: 12px 6px 6px; border-top: 1px solid #7a7a7a; }
.saved .check { padding-left: 1px; }
.saved .drop-list { width: 155px; }
.query { width: 108px; margin: 8px 0 12px 12px; display: block; }
.name-rows { display: flex; flex-direction: column; gap: 3px; padding: 12px 5px 7px; }
.name-row { display: flex; gap: 7px; }
.name-row label { width: 9px; padding-top: 3px; }
.name-row .kind { width: 130px; }
.name-row .mode { width: 68px; padding-right: 0; }
.name-row .text-box { width: 114px; }
.name-row .btn { width: 92px; }

/* Board */
.center { display: flex; flex-direction: column; min-width: 0; background: #f0f0f0; }
.tabs { display: flex; gap: 4px; height: 23px; flex: none; }
.tabs button { background: #7a7a7a; color: #f4f4f4; padding: 0 5px; white-space: nowrap; }
.tabs button.active { background: #0a70dc; }
.tabs button.tab { width: 68px; }
.tabs button.tab-wide { width: 98px; padding: 0; }
.doc-tabs button { width: 60px; padding: 0; }
.doc-tabs button.active { width: 53px; }
.lower { margin-top: 6px; }
.board { flex: 1 1 0; width: 100%; min-height: 0; display: block; background: #000; }
.board .outline { fill: none; stroke: #fff; }
.cursor { fill: none; stroke: #808078; }
.pad { fill: #877806; }
.hatch { fill: url(#hatch); }
.keepout { fill: none; stroke: #d0261c; }
.silk { fill: none; stroke: #56c8da; }
.overlap { fill: none; stroke: #84dc72; }
.net { fill: #c4ba62; font-size: 9px; text-anchor: middle; }
.net.small { font-size: 7px; }
.net.tiny { font-size: 6px; }

/* Options */
.options { flex: 1; }
.class-form { display: grid; grid-template-columns: 19px 165px; column-gap: 9px; row-gap: 9px; padding: 6px 12px; align-items: center; justify-items: start; }
.class-form label { grid-column: 1 / -1; margin: 0 0 -2px -6px; }
.class-form #klass { grid-column: 2; width: 145px; }
.active-color { width: 19px; height: 19px; border: 1px solid #111; background: #fdee10; }
.subclass { position: relative; display: flex; }
.subclass .drop-list { width: 165px; padding-left: 24px; }
.subclass i { position: absolute; left: 6px; top: 6px; width: 10px; height: 10px; border: 1px solid #111; background: #fdee10; }

/* Command */
.command { flex: 0 0 269px; min-height: 0; height: 269px; display: flex; flex-direction: column; gap: 6px; }
.log { position: relative; flex: 1 1 0; display: flex; margin: 3px 9px 0; padding: 3px 20px 19px 7px; border: 1px solid #7a7a7a; background: #fff; min-height: 0; }
.lines { flex: 1; min-height: 0; display: flex; flex-direction: column; justify-content: flex-end; overflow: hidden; }
.lines p { flex: none; line-height: 13px; white-space: pre; }
.thumb-v { position: absolute; right: 5px; bottom: 15px; width: 8px; height: 24px; background: #7e7e7e; }
.thumb-h { position: absolute; left: 3px; bottom: 5px; width: 201px; height: 8px; background: #7e7e7e; }
.prompt { margin: 0 9px 9px; flex: none; padding-left: 2px; }

/* Status bar */
.status { display: grid; grid-template-columns: 840px 1fr auto; align-items: center; height: 27px; padding: 0 13px 0 0; border-top: 2px solid #fff; }
.status-left, .status-mid, .status-right { display: flex; align-items: center; }
.ready { width: 50px; height: 22px; line-height: 22px; margin: 0 12px 0 2px; padding-left: 6px; background: #04dc10; color: #0b4a18; }
.status-mid { gap: 6px; }
.layer-name { width: 45px; }
.coords { width: 84px; }
.status-mid .btn { width: 22px; }
.status-mid .unit { width: 50px; }
.item { display: flex; align-items: center; gap: 7px; margin-right: 17px; }
.item + .item { margin-right: 10px; }
.drc { display: flex; align-items: center; gap: 6px; width: 53px; height: 22px; padding-left: 6px; background: #f21d0a; color: #7a0e06; margin-right: 12px; }
.item.picks { margin-right: 0; }
```
